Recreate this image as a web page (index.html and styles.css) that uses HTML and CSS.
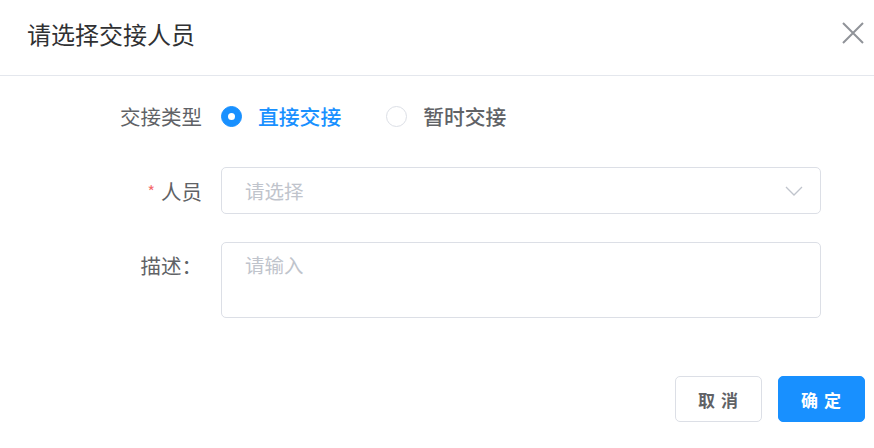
FILE: index.html
```html
<!DOCTYPE html>
<html lang="zh-CN">
<head>
<meta charset="utf-8">
<link rel="stylesheet" href="styles.css">
</head>
<body>
<div class="dialog">
  <div class="header">
    <div class="title">请选择交接人员</div>
    <svg class="close" width="22" height="22" viewBox="0 0 22 22"><path d="M1 1 L21 21 M21 1 L1 21" stroke="#909399" stroke-width="2" fill="none"/></svg>
  </div>
  <div class="body">
    <div class="row">
      <div class="label">交接类型</div>
      <div class="control radios">
        <label class="radio checked"><span class="dot"></span><span class="rtext">直接交接</span></label>
        <label class="radio"><span class="dot"></span><span class="rtext">暂时交接</span></label>
      </div>
    </div>
    <div class="row mid">
      <div class="label"><span class="star">*</span>人员</div>
      <div class="control">
        <div class="select">
          <span class="placeholder">请选择</span>
          <svg class="chev" width="18" height="10" viewBox="0 0 18 10"><path d="M1 1 L9 9 L17 1" stroke="#c0c4cc" stroke-width="1.3" fill="none"/></svg>
        </div>
      </div>
    </div>
    <div class="row tall">
      <div class="label">描述：</div>
      <div class="control">
        <div class="textarea"><span class="placeholder">请输入</span></div>
      </div>
    </div>
  </div>
  <div class="footer">
    <button class="btn">取 消</button>
    <button class="btn primary">确 定</button>
  </div>
</div>
</body>
</html>
```

FILE: styles.css
```css
* { box-sizing: border-box; }
html, body { margin: 0; padding: 0; background: #fff; }
body {
  font-family: "Noto Sans CJK SC", "Noto Sans", sans-serif;
  width: 874px;
  height: 448px;
  overflow: hidden;
}
.dialog { display: flex; flex-direction: column; }
.header {
  height: 76px;
  border-bottom: 1px solid #e4e7ed;
  display: flex;
  justify-content: space-between;
  align-items: flex-start;
  padding: 18px 10px 0 27px;
}
.title {
  font-size: 24px;
  line-height: 32px;
  color: #303133;
}
.close { margin-top: 4px; }
.body { padding: 17px 53px 0 0; display: flex; flex-direction: column; gap: 28px; }
.row { display: flex; height: 46px; align-items: center; }
.row.mid { height: 47px; }
.row.tall { height: 76px; align-items: flex-start; }
.label {
  width: 221px;
  padding-right: 19px;
  text-align: right;
  font-size: 20.5px;
  line-height: 46px;
  color: #606266;
  flex-shrink: 0;
}
.star { color: #f56c6c; font-size: 16px; margin-right: 6px; vertical-align: 2px; }
.control { flex: 1; }
.radios { display: flex; align-items: center; gap: 45px; }
.radio { display: flex; align-items: center; gap: 16px; font-size: 20.8px; color: #606266; font-weight: 500; }
.dot {
  width: 21px; height: 21px; border-radius: 50%;
  border: 1px solid #dcdfe6; background: #fff;
  display: flex; align-items: center; justify-content: center;
}
.radio.checked .dot { background: #1890ff; border-color: #1890ff; }
.radio.checked .dot::after { content: ""; width: 7px; height: 7px; border-radius: 50%; background: #fff; }
.radio.checked .rtext { color: #1890ff; }
.select {
  height: 47px;
  border: 1px solid #dcdfe6;
  border-radius: 5px;
  display: flex;
  align-items: center;
  justify-content: space-between;
  padding: 0 17px 0 23px;
}
.placeholder { font-size: 19.5px; color: #c0c4cc; }
.textarea {
  height: 76px;
  border: 1px solid #dcdfe6;
  border-radius: 5px;
  padding: 7px 23px;
  line-height: 30px;
}
.footer {
  display: flex;
  justify-content: flex-end;
  gap: 16px;
  padding: 58px 9px 0 0;
}
.btn {
  height: 46px;
  width: 87px;
  border: 1px solid #dcdfe6;
  border-radius: 5px;
  background: #fff;
  color: #606266;
  font-family: inherit;
  font-size: 17px;
  font-weight: 600;
  letter-spacing: 1px;
  padding: 0;
}
.btn.primary { background: #1890ff; border-color: #1890ff; color: #fff; }
```
